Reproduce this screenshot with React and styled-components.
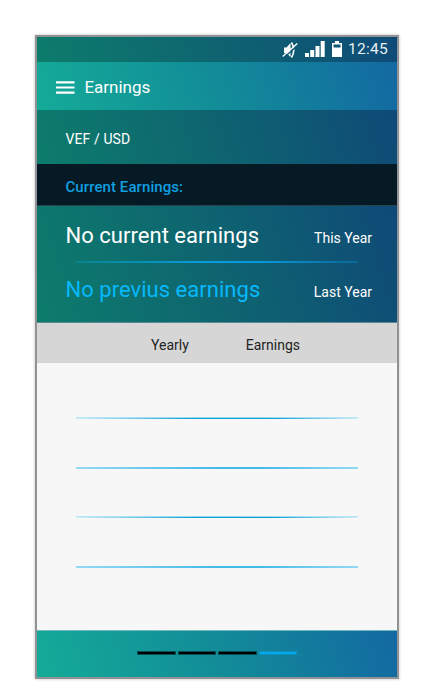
import React from "react";
import styled, { createGlobalStyle } from "styled-components";

const GlobalStyle = createGlobalStyle`
  * { box-sizing: border-box; }
  body { margin: 0; background: #fff; font-family: Roboto, "Liberation Sans", sans-serif; }
`;

const bright = "linear-gradient(72deg, #14ab98 0%, #128c98 50%, #1369a2 100%)";
const deep = "linear-gradient(72deg, #0d7c6c 0%, #0e6470 50%, #0f4a77 100%)";

const Page = styled.main`
  width: 434px;
  height: 682px;
  padding: 35px 0 0 35px;
  overflow: hidden;
`;

const Phone = styled.div`
  width: 364px;
  height: 644px;
  display: flex;
  flex-direction: column;
  border: 2px solid #909296;
  background: #f7f7f7;
  box-shadow: 0 0 3px rgba(0, 0, 0, 0.25);
`;

const StatusBar = styled.div`
  height: 25px;
  flex: none;
  display: flex;
  align-items: center;
  justify-content: flex-end;
  padding-right: 9px;
  background: ${deep};
  color: #e8f0f3;
`;

const Clock = styled.span`
  margin-left: 6px;
  font-size: 15.5px;
  line-height: 25px;
  letter-spacing: 0.3px;
`;

const Header = styled.header`
  height: 48px;
  flex: none;
  display: flex;
  align-items: center;
  padding: 2px 0 0 19px;
  background: ${bright};
  color: #fff;
`;

const Title = styled.h1`
  margin: 0 0 0 9.4px;
  font-size: 17px;
  font-weight: 400;
  line-height: 24px;
`;

const PairBar = styled.div`
  height: 54px;
  flex: none;
  padding: 4px 28.5px 0;
  background: ${deep};
  color: #fff;
  font-size: 14px;
  letter-spacing: 0.1px;
  line-height: 50px;
`;

const SectionTitle = styled.h2`
  height: 42px;
  flex: none;
  margin: 0;
  padding: 3px 28.5px 0;
  background: #051a24;
  border-bottom: 1px solid #26444e;
  color: #109fe0;
  font-size: 15px;
  font-weight: 500;
  letter-spacing: 0.08px;
  line-height: 40px;
`;

const Summary = styled.section`
  height: 117px;
  flex: none;
  padding: 15px 25px 0 28.5px;
  border-bottom: 1px solid #5c8794;
  background: ${deep};
`;

const SummaryRow = styled.div`
  display: flex;
  align-items: baseline;
  justify-content: space-between;
  height: 30px;
  line-height: 30px;
  color: #fff;
  font-size: 14px;
`;

const Amount = styled.span`
  color: ${(p) => (p.$accent ? "#06b9fb" : "#fff")};
  font-size: 22px;
  letter-spacing: 0.03px;
`;

const Divider = styled.hr`
  height: 2px;
  margin: 10px 14px 12px 10.5px;
  border: 0;
  background: linear-gradient(90deg, #09848f, #0a9bdc 45%, #0a98dc 65%, #0c6797);
`;

const TableHead = styled.div`
  height: 40px;
  flex: none;
  display: flex;
  align-items: center;
  gap: 57px;
  padding: 4px 0 0 114px;
  background: #d6d6d6;
  color: #222;
  font-size: 14px;
`;

const ColumnName = styled.span`
  line-height: 18px;
`;

const TableBody = styled.div`
  flex: 1;
  display: flex;
  flex-direction: column;
  padding: 54px 39px 0;
`;

const Rule = styled.div`
  height: 2px;
  flex: none;
  margin-bottom: ${(p) => p.$gap}px;
  background: ${(p) =>
    p.$fine
      ? "linear-gradient(90deg, #b9e5f3, #8fd9f0 50%, #b9e5f3) 0 0 / 100% 1px no-repeat, linear-gradient(90deg, #d4eff8, #119fd8 42%, #119fd8 70%, #d4eff8)"
      : "linear-gradient(90deg, #94d9f4, #43bbea 50%, #43bbea 65%, #94d9f4)"};
`;

const Footer = styled.footer`
  height: 47px;
  flex: none;
  display: flex;
  align-items: center;
  justify-content: center;
  gap: 2px;
  padding-bottom: 2px;
  border-top: 1px solid #72b9bf;
  background: ${bright};
`;

const Step = styled.span`
  width: 38.5px;
  height: 4px;
  border: 1px solid ${(p) => (p.$active ? "#0d8fba" : "#084e55")};
  background: ${(p) => (p.$active ? "#03a9ee" : "#000")};
`;

const MutedIcon = () => (
  <svg width="16" height="18" viewBox="0 0 16 18" fill="none">
    <path d="M2 6.500h2.500L8.500 2v14L4.500 12H2z" fill="#fff" />
    <path d="M9.500 1.500q4.500 7.500 0 15" stroke="#fff" strokeWidth="1.600" />
    <path d="M2 16.500 15.500 4.500" stroke="#0f5871" strokeWidth="1.500" />
    <path d="M.7 15.500 15.300 2.500" stroke="#fff" strokeWidth="1.400" />
  </svg>
);

const SignalIcon = () => (
  <svg width="20" height="17" viewBox="0 0 20 17" fill="#fff">
    <path d="M0 12h4v4H0zM5.200 9h4v7h-4zM10.500 5h4V16h-4zM15.700 0h4v16h-4z" />
  </svg>
);

const BatteryIcon = () => (
  <svg width="10" height="17" viewBox="0 0 10 17">
    <path d="M3 0h4v2h3v14H0V2h3z" fill="#fff" />
    <path d="M1.500 3.500h7v3h-7z" fill="#0e5672" />
  </svg>
);

const IconRow = styled.span`
  display: flex;
  align-items: center;
  gap: ${(p) => p.$gap}px;
`;

const MenuIcon = () => (
  <svg width="19" height="13" viewBox="0 0 19 13" fill="#fff">
    <path d="M0 .2h18.500v2.200H0zM0 5.400h18.500v2.200H0zM0 10.500h18.500v2.200H0z" />
  </svg>
);

export default function App() {
  return (
    <>
      <GlobalStyle />
      <Page>
        <Phone>
          <StatusBar>
            <IconRow $gap={7}>
              <MutedIcon />
              <SignalIcon />
              <BatteryIcon />
            </IconRow>
            <Clock>12:45</Clock>
          </StatusBar>
          <Header>
            <MenuIcon />
            <Title>Earnings</Title>
          </Header>
          <PairBar>VEF / USD</PairBar>
          <SectionTitle>Current Earnings:</SectionTitle>
          <Summary>
            <SummaryRow>
              <Amount>No current earnings</Amount>
              <span>This Year</span>
            </SummaryRow>
            <Divider />
            <SummaryRow>
              <Amount $accent>No previus earnings</Amount>
              <span>Last Year</span>
            </SummaryRow>
          </Summary>
          <TableHead>
            <ColumnName>Yearly</ColumnName>
            <ColumnName>Earnings</ColumnName>
          </TableHead>
          <TableBody>
            <Rule $fine $gap={48} />
            <Rule $gap={47} />
            <Rule $fine $gap={48} />
            <Rule $gap={0} />
          </TableBody>
          <Footer>
            <Step />
            <Step />
            <Step />
            <Step $active />
          </Footer>
        </Phone>
      </Page>
    </>
  );
}
